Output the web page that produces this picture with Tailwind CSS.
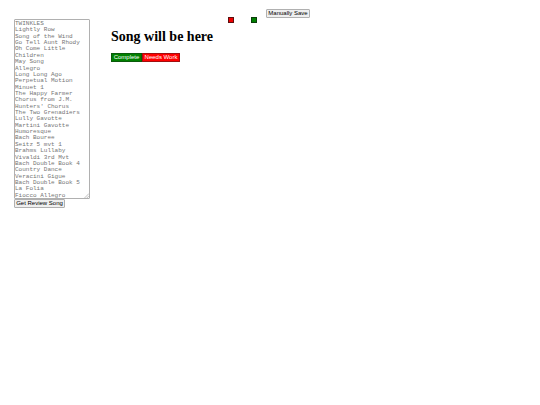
<!DOCTYPE html>
<html lang="en">
<head>
    <meta charset="UTF-8" />
    <meta name="viewport" content="width=device-width, initial-scale=1.0" />
    <title>Song Review</title>
    <script src="https://cdn.jsdelivr.net/npm/@tailwindcss/browser@4"></script>
</head>
<body class="bg-white text-black font-['Liberation_Sans',Arial,sans-serif]">
    <div class="flex items-start pl-[14px] pt-[9px]">
        <!-- Song list -->
        <div class="flex flex-col items-start w-[76px] pt-[10px]">
            <div class="relative w-full">
                <textarea aria-label="Songs" rows="28" class="block w-full h-[180px] py-px border border-[#b0b0b0] rounded-[1px] resize-none overflow-hidden whitespace-pre font-['Liberation_Mono','Courier_New',monospace] text-[6px] leading-[1.06] text-[#757575]">TWINKLES
Lightly Row
Song of the Wind
Go Tell Aunt Rhody
Oh Come Little
Children
May Song
Allegro
Long Long Ago
Perpetual Motion
Minuet 1
The Happy Farmer
Chorus from J.M.
Hunters' Chorus
The Two Grenadiers
Lully Gavotte
Martini Gavotte
Humoresque
Bach Bouree
Seitz 5 mvt 1
Brahms Lullaby
Vivaldi 3rd Mvt
Bach Double Book 4
Country Dance
Veracini Gigue
Bach Double Book 5
La Folia
Fiocco Allegro</textarea>
                <svg class="absolute right-px bottom-px w-[5px] h-[5px]" viewBox="0 0 5 5" fill="none" stroke="#999" stroke-width="0.6" aria-hidden="true">
                    <path d="M0.5 5L5 0.5M2.8 5L5 2.8" />
                </svg>
            </div>
            <button class="w-[51px] h-[9px] border border-[#b0b0b0] rounded-[1px] bg-[#efefef] text-[6px] leading-[7px] whitespace-nowrap flex items-center justify-center">Get Review Song</button>
        </div>

        <!-- Current song -->
        <div class="ml-[21px] w-[117px] pt-[20px]">
            <h1 class="font-['Liberation_Serif','Times_New_Roman',serif] font-bold text-[14px] leading-[15px] whitespace-nowrap">Song will be here</h1>
            <div class="flex mt-[9px] text-white text-[6px] leading-[7px]">
                <button class="w-[31px] h-[9px] border border-[#0b5a0b] bg-[#008000] flex items-center justify-center">Complete</button>
                <button class="w-[38px] h-[9px] border border-[#a01010] bg-[#ff0000] whitespace-nowrap flex items-center justify-center">Needs Work</button>
            </div>
        </div>

        <!-- Color buttons -->
        <div class="flex gap-[17px] pt-[8px]">
            <button aria-label="Red" class="w-[6px] h-[6px] border border-[#5a1010] bg-[#ee0000]"></button>
            <button aria-label="Green" class="w-[6px] h-[6px] border border-[#0b3d0b] bg-[#008000]"></button>
        </div>

        <button class="ml-[9px] w-[44px] h-[9px] border border-[#b0b0b0] rounded-[1px] bg-[#efefef] text-[6px] leading-[7px] whitespace-nowrap flex items-center justify-center">Manually Save</button>
    </div>
</body>
</html>
